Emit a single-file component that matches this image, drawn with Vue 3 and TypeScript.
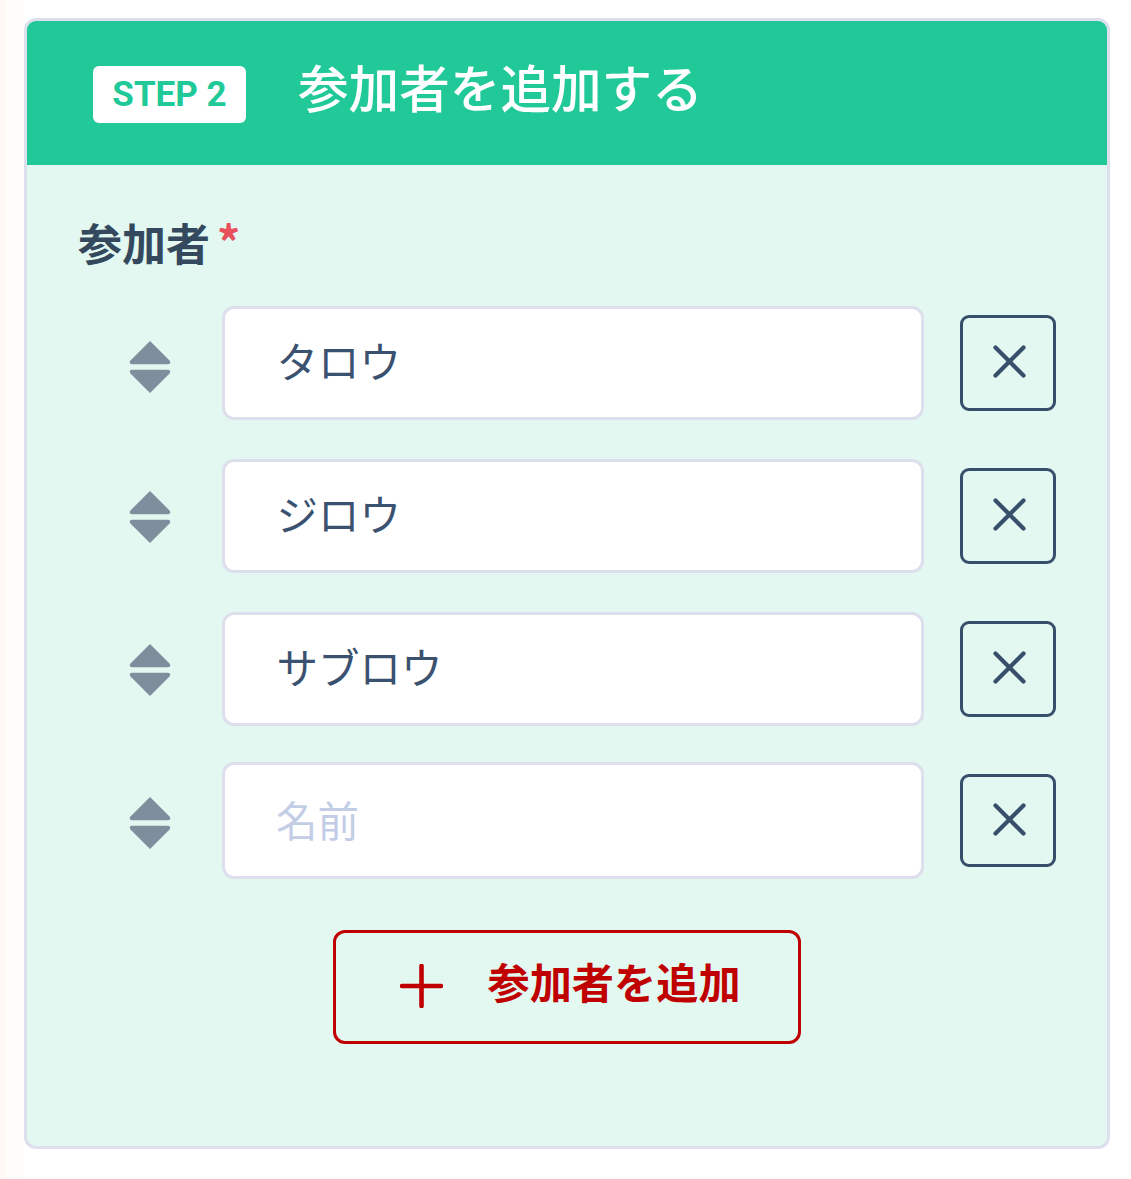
<script setup lang="ts">
interface Row { value: string; cls: string }
const rows: Row[] = [
  { value: 'タロウ', cls: 'first' },
  { value: 'ジロウ', cls: '' },
  { value: 'サブロウ', cls: '' },
  { value: '', cls: 'last' },
]
</script>

<template>
  <div class="page">
    <section class="card">
      <header class="head">
        <span class="badge">STEP 2</span>
        <h2 class="title">参加者を追加する</h2>
      </header>
      <div class="body">
        <div class="label">参加者<span class="req">*</span></div>
        <div class="rows">
          <div v-for="(r, i) in rows" :key="i" class="row" :class="r.cls">
            <span class="handle">
              <svg width="42" height="52" viewBox="0 0 42 52">
                <path d="M21 1 L40 20 Q41.500 22.500 38.500 22.500 H3.500 Q0.500 22.500 2 20 Z" fill="#7f8e9d" stroke="#7f8e9d" stroke-width="1.500" stroke-linejoin="round" />
                <path d="M21 51 L40 32 Q41.500 29.500 38.500 29.500 H3.500 Q0.500 29.500 2 32 Z" fill="#7f8e9d" stroke="#7f8e9d" stroke-width="1.500" stroke-linejoin="round" />
              </svg>
            </span>
            <input class="field" type="text" :value="r.value" placeholder="名前" />
            <button class="del" type="button" aria-label="削除">
              <svg width="33" height="33" viewBox="0 0 33 33">
                <path d="M2.500 2.500 L30.500 30.500 M30.500 2.500 L2.500 30.500" stroke="#374f6b" stroke-width="4.200" stroke-linecap="round" fill="none" />
              </svg>
            </button>
          </div>
        </div>
        <div class="add-wrap">
          <button class="add" type="button">
            <svg class="plus" width="43" height="44" viewBox="0 0 43 44">
              <path d="M21.500 2 V42 M2 22 H41" stroke="#c00000" stroke-width="4.600" stroke-linecap="round" fill="none" />
            </svg>
            <span>参加者を追加</span>
          </button>
        </div>
      </div>
    </section>
  </div>
</template>

<style>
html, body { margin: 0; background: #fff; }
</style>

<style scoped>
.page {
  width: 1131px;
  height: 1179px;
  box-sizing: border-box;
  padding: 18px 21px 0 24px;
  font-family: "Noto Sans CJK JP", "Noto Sans", sans-serif;
  background: linear-gradient(to right, #fff8f5 0 6px, #fffdfc 6px 24px, #fff 24px);
}
.card {
  box-sizing: border-box;
  width: 1086px;
  height: 1131px;
  border: 3px solid #dde0ec;
  border-radius: 12px;
  background: #e2f8f1;
  overflow: hidden;
}
.head {
  height: 144px;
  background: #20c997;
  display: flex;
  align-items: center;
  padding-left: 66px;
  gap: 52px;
}
.badge {
  width: 153px;
  height: 57px;
  margin-top: 2px;
  background: #fff;
  color: #20c997;
  border-radius: 6px;
  font-family: Roboto, sans-serif;
  font-weight: 700;
  font-size: 35px;
  display: flex;
  align-items: center;
  justify-content: center;
}
.title {
  margin: 0 0 14px;
  color: #fff;
  font-size: 50.6px;
  font-weight: 500;
  line-height: 1.2;
}
.body {
  padding: 47px 51px 0 51px;
}
.label {
  color: #34495e;
  font-size: 44px;
  font-weight: 700;
  line-height: 60px;
  display: flex;
  height: 94px;
}
.req {
  color: #e8505b;
  font-size: 46px;
  margin-left: 7px;
  font-weight: 700;
  line-height: 56px;
}
.rows {
  display: flex;
  flex-direction: column;
  gap: 39px;
}
.row {
  display: flex;
  align-items: center;
  height: 114px;
}
.row.last {
  height: 117px;
  margin-top: -3px;
}
.handle {
  width: 42px;
  margin-left: 51px;
  margin-right: 51px;
  display: flex;
  margin-top: 2px;
}
.row.first .handle { margin-top: 8px; }
.row.last .handle { margin-top: 5px; }
.handle svg { display: block; }
.field {
  box-sizing: border-box;
  width: 702px;
  height: 100%;
  border: 3px solid #dde0ec;
  border-radius: 12px;
  background: #fff;
  padding: 0 52px 6px 51.5px;
  color: #3b5170;
  font-family: inherit;
  font-size: 41.5px;
  outline: none;
}
.row.last .field { padding-left: 51px; padding-bottom: 3px; }
.field::placeholder { color: #c3cde6; opacity: 1; }
.del {
  box-sizing: border-box;
  width: 96px;
  height: 96px;
  margin-left: 36px;
  border: 3px solid #374f6b;
  border-radius: 9px;
  background: transparent;
  display: flex;
  align-items: center;
  justify-content: center;
  padding: 0 0 3px 2px;
}
.row.last .del { height: 93px; }
.add-wrap {
  display: flex;
  justify-content: center;
  margin-top: 51px;
  padding-right: 1px;
}
.add {
  box-sizing: border-box;
  width: 468px;
  height: 114px;
  border: 3px solid #c00000;
  border-radius: 12px;
  background: transparent;
  color: #c00000;
  font-family: inherit;
  font-size: 42.2px;
  font-weight: 700;
  display: flex;
  align-items: center;
  padding: 0 0 0 64px;
  gap: 45px;
}
.add span { margin-top: -13px; }
.plus { flex: none; margin-top: -2px; }
</style>
